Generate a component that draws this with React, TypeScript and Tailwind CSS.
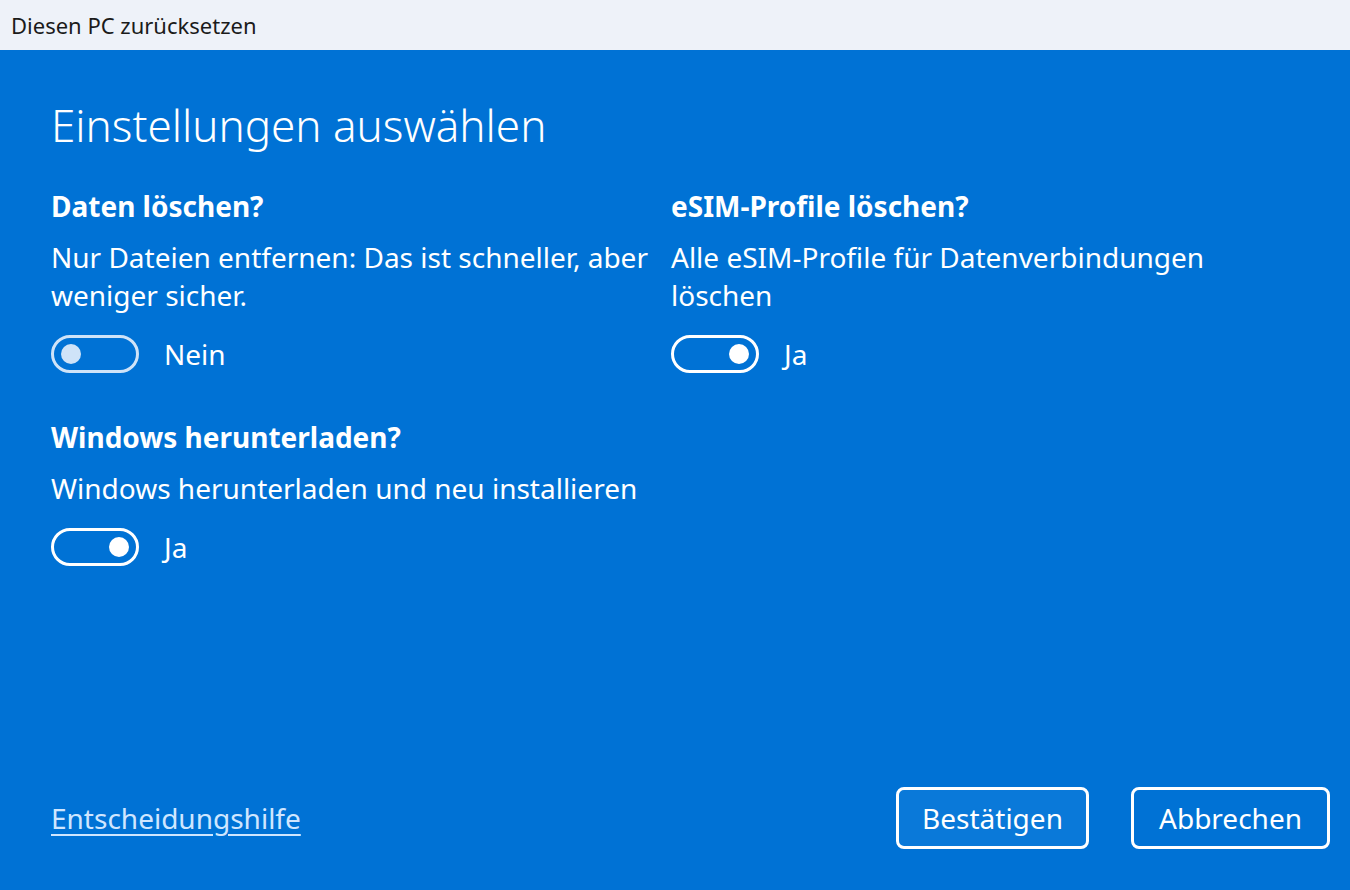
import React, { useState } from 'react';

const FONT = { fontFamily: '"Noto Sans", "Open Sans", sans-serif' };

// Toggle switch in the Windows 11 style, on a blue background
const Toggle: React.FC<{ on: boolean; onChange: () => void }> = ({ on, onChange }) => (
  <button
    type="button"
    onClick={onChange}
    className={`flex h-[38px] w-[88px] items-center rounded-full border-[3px] px-[7px] ${
      on ? 'justify-end border-white' : 'justify-start border-[#cfe3f8]'
    }`}
  >
    <span className={`block h-[20px] w-[20px] rounded-full ${on ? 'bg-white' : 'bg-[#cfe3f8]'}`} />
  </button>
);

interface OptionProps {
  title: string;
  text: React.ReactNode;
  on: boolean;
  onChange: () => void;
}

const Option: React.FC<OptionProps> = ({ title, text, on, onChange }) => (
  <div className="flex flex-col">
    <h2 className="text-[28px] font-bold leading-[38px]">{title}</h2>
    <p className="mt-[13px] text-[28px] leading-[38px]">{text}</p>
    <div className="mt-[21px] flex items-center gap-[25px]">
      <Toggle on={on} onChange={onChange} />
      <span className="text-[28px] leading-[38px]">{on ? 'Ja' : 'Nein'}</span>
    </div>
  </div>
);

export default function App() {
  const [deleteData, setDeleteData] = useState(false);
  const [deleteEsim, setDeleteEsim] = useState(true);
  const [download, setDownload] = useState(true);

  return (
    <div className="flex h-[890px] w-[1350px] flex-col bg-[#0072d5] text-white" style={FONT}>
      {/* Title bar */}
      <div className="flex h-[50px] items-center bg-[#eef2f9] px-[11px] text-[22px] text-[#1b1b1b]">
        Diesen PC zurücksetzen
      </div>

      <div className="flex flex-1 flex-col px-[51px]">
        <h1 className="mt-[49px] text-[44px] font-light leading-[52px]">Einstellungen auswählen</h1>

        <div className="mt-[36px] grid grid-cols-[620px_1fr]">
          <Option
            title="Daten löschen?"
            text={<>Nur Dateien entfernen: Das ist schneller, aber<br />weniger sicher.</>}
            on={deleteData}
            onChange={() => setDeleteData(v => !v)}
          />
          <Option
            title="eSIM-Profile löschen?"
            text={<>Alle eSIM-Profile für Datenverbindungen<br />löschen</>}
            on={deleteEsim}
            onChange={() => setDeleteEsim(v => !v)}
          />
        </div>

        <div className="mt-[45px]">
          <Option
            title="Windows herunterladen?"
            text="Windows herunterladen und neu installieren"
            on={download}
            onChange={() => setDownload(v => !v)}
          />
        </div>

        {/* Footer */}
        <div className="mt-auto mb-[41px] flex items-center justify-between">
          <a href="#" className="text-[28px] text-[#cfe6ff] underline underline-offset-[5px]">
            Entscheidungshilfe
          </a>
          <div className="mr-[-31px] flex gap-[42px]">
            <button className="h-[62px] w-[193px] rounded-[8px] border-[3px] border-white bg-[#0a79d9] text-[28px]">
              Bestätigen
            </button>
            <button className="h-[62px] w-[199px] rounded-[8px] border-[3px] border-white text-[28px]">
              Abbrechen
            </button>
          </div>
        </div>
      </div>
    </div>
  );
}
